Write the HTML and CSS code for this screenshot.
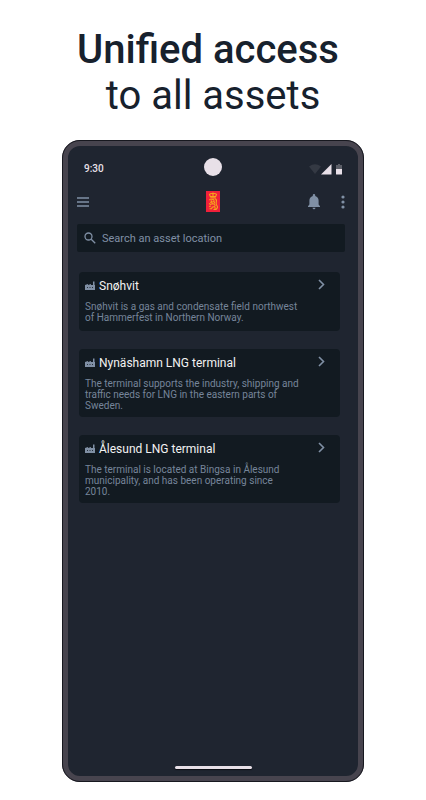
FILE: index.html
```html
<!DOCTYPE html>
<html lang="en">
<head>
    <meta charset="utf-8">
    <title>Unified access to all assets</title>
    <meta name="viewport" content="width=device-width, initial-scale=1">
    <link rel="stylesheet" href="styles.css">
</head>
<body>
<div class="page">
    <h1 class="headline"><strong>Unified access&nbsp;</strong><br>to all assets</h1>

    <div class="phone">
        <div class="status-bar">
            <span class="time">9:30</span>
            <span class="camera"></span>
            <div class="status-icons">
                <svg width="12" height="12" viewBox="0 0 12 12"><path d="M0 3.5Q6-1 12 3.5L6 11z" fill="#343943"/></svg>
                <svg width="11" height="12" viewBox="0 0 11 12"><path d="M0 11.5L10.500 1v10.500z" fill="#e8e0e8"/></svg>
                <svg class="battery" width="6" height="12" viewBox="0 0 6 12">
                    <path d="M2 1h2v1h2v4H0V2h2z" fill="#5c5f68"/>
                    <path d="M0 6h6v5q0 .5-.5.5h-5Q0 11.500 0 11z" fill="#e8e0e8"/>
                </svg>
            </div>
        </div>

        <header class="app-bar">
            <button class="icon-button menu" type="button" aria-label="Menu">
                <svg width="12" height="10" viewBox="0 0 12 10"><path d="M0 1h12M0 5h12M0 9h12" stroke="#8090a5" stroke-width="1.300"/></svg>
            </button>
            <svg class="logo" width="14" height="21" viewBox="0 0 14 21">
                <path d="M0 0h14v21H0z" fill="#f0203a"/>
                <g fill="none" stroke="#f6a51c" stroke-width="1.100">
                    <path d="M4.300 5.500L3.500 3.400Q5 2 7 2.900Q9 2 10.500 3.400L9.700 5.500zM7 1.500v3.500M4.300 6.900h5.400"/>
                    <path d="M3 8.800h2.500q2.500-.8 2.500.8T5.500 11.200H4M3 12.500l1.500 1 2-.8 2 .6q1.200 1 .2 2.200l-2.500.6-.5 1.600H3.500M3 15.500l2-.5M7.500 18.500h3"/>
                    <path d="M9 7.800q2 .6 1.300 3t.7 4-1 3.500M5.500 9.500v2M8.500 10.500v2M9 16v2"/>
                </g>
            </svg>
            <div class="actions">
                <button class="icon-button" type="button" aria-label="Notifications">
                    <svg width="12" height="16" viewBox="0 0 12 16"><path d="M6 0c.8 0 1.200.6 1.200 1.300v.6C9.400 2.500 10.600 4.300 10.600 6.500v4L12 12.200V13H0v-.8l1.400-1.700v-4c0-2.200 1.200-4 3.400-4.600v-.6C4.800.6 5.200 0 6 0zM4.500 13.800h3Q7.300 15.300 6 15.300t-1.500-1.500z" fill="#8090a5"/></svg>
                </button>
                <button class="icon-button" type="button" aria-label="More options">
                    <svg width="4" height="14" viewBox="0 0 4 14" fill="#8090a5"><circle cx="2" cy="2" r="1.600"/><circle cx="2" cy="7" r="1.600"/><circle cx="2" cy="12" r="1.600"/></svg>
                </button>
            </div>
        </header>

        <label class="search">
            <svg width="12" height="12" viewBox="0 0 12 12" fill="none" stroke="#8090a5" stroke-width="1.300"><circle cx="4.500" cy="4.500" r="3.500"/><path d="M7.200 7.200L11.200 11.200"/></svg>
            <input type="search" placeholder="Search an asset location" aria-label="Search an asset location">
        </label>

        <main class="assets">
            <a class="card" href="#snohvit">
                <div class="card-head">
                    <svg class="plant" width="10" height="10" viewBox="0 0 10 10"><path d="M0 9V4l3-1v1l3-1v1h2V.500h1.500V4h.5v5z" fill="#8090a5"/><path d="M2 6h1v1H2zM4.500 6h1v1h-1zM7 6h1v1H7z" fill="#26313d"/></svg>
                    <h2>Snøhvit</h2>
                    <svg class="chevron" width="7" height="11" viewBox="0 0 7 11"><path d="M1 1l4.500 4.500L1 10" fill="none" stroke="#8090a5" stroke-width="1.600"/></svg>
                </div>
                <p>Snøhvit is a gas and condensate field northwest of Hammerfest in Northern Norway.</p>
            </a>
            <a class="card" href="#nynashamn">
                <div class="card-head">
                    <svg class="plant" width="10" height="10" viewBox="0 0 10 10"><path d="M0 9V4l3-1v1l3-1v1h2V.500h1.500V4h.5v5z" fill="#8090a5"/><path d="M2 6h1v1H2zM4.500 6h1v1h-1zM7 6h1v1H7z" fill="#26313d"/></svg>
                    <h2>Nynäshamn LNG terminal</h2>
                    <svg class="chevron" width="7" height="11" viewBox="0 0 7 11"><path d="M1 1l4.500 4.500L1 10" fill="none" stroke="#8090a5" stroke-width="1.600"/></svg>
                </div>
                <p>The terminal supports the industry, shipping and traffic needs for LNG in the eastern parts of Sweden.</p>
            </a>
            <a class="card" href="#alesund">
                <div class="card-head">
                    <svg class="plant" width="10" height="10" viewBox="0 0 10 10"><path d="M0 9V4l3-1v1l3-1v1h2V.500h1.500V4h.5v5z" fill="#8090a5"/><path d="M2 6h1v1H2zM4.500 6h1v1h-1zM7 6h1v1H7z" fill="#26313d"/></svg>
                    <h2>Ålesund LNG terminal</h2>
                    <svg class="chevron" width="7" height="11" viewBox="0 0 7 11"><path d="M1 1l4.500 4.500L1 10" fill="none" stroke="#8090a5" stroke-width="1.600"/></svg>
                </div>
                <p>The terminal is located at Bingsa in Ålesund municipality, and has been operating since<br>2010.</p>
            </a>
        </main>

        <div class="home-bar"></div>
    </div>
</div>
</body>
</html>
```

FILE: styles.css
```css
* {
    box-sizing: border-box;
}

body {
    margin: 0;
    background: #fff;
    font-family: Roboto, "Liberation Sans", sans-serif;
}

.page {
    display: flex;
    flex-direction: column;
    min-height: 100vh;
    padding: 27px 62px 18px;
}

.headline {
    margin: 0 -40px 21px;
    color: #17212d;
    font-size: 40px;
    font-weight: 400;
    line-height: 46px;
    text-align: center;
}

.headline strong {
    font-weight: 500;
}

/* phone frame */
.phone {
    display: flex;
    flex: 1;
    flex-direction: column;
    padding: 12px 0 7px;
    background: #1f2530;
    border: 6px solid #47444e;
    border-radius: 18px;
    outline: 1px solid #17181f;
    outline-offset: -1px;
}

.status-bar {
    display: grid;
    grid-template-columns: 1fr auto 1fr;
    align-items: center;
    padding: 0 16px;
}

.time {
    padding-top: 2px;
    color: #e8e0e8;
    font-size: 10px;
    font-weight: 500;
}

.camera {
    width: 18px;
    height: 18px;
    background: #e8e0e8;
    border-radius: 50%;
}

.status-icons {
    display: flex;
    justify-content: flex-end;
    padding-top: 4px;
}

.battery {
    margin-left: 4px;
}

.app-bar {
    display: grid;
    grid-template-columns: 1fr auto 1fr;
    align-items: center;
    padding: 15px 9px 12px;
}

.icon-button {
    display: flex;
    padding: 0;
    background: none;
    border: 0;
}

.actions {
    display: flex;
    justify-content: flex-end;
    align-items: center;
    gap: 21px;
    padding-right: 4px;
}

.search {
    display: flex;
    align-items: center;
    gap: 6px;
    height: 28px;
    margin: 0 13px 0 9px;
    padding: 0 7px;
    background: #121a21;
    border-radius: 2px;
}

.search input {
    flex: 1;
    min-width: 0;
    padding: 0;
    color: #8090a5;
    font: 11px Roboto, "Liberation Sans", sans-serif;
    background: none;
    border: 0;
    outline: 0;
}

.search input::placeholder {
    color: #8090a5;
}

/* asset list */
.assets {
    display: flex;
    flex: 1;
    flex-direction: column;
    gap: 18px;
    padding: 20px 18px 20px 11px;
}

.card {
    min-height: 59px;
    padding: 7px 6px 6px;
    color: #76859a;
    text-decoration: none;
    background: #121a21;
    border-radius: 4px;
}

.card-head {
    display: flex;
    align-items: center;
    gap: 4px;
    padding-right: 9px;
}

.card h2 {
    flex: 1;
    margin: 0;
    color: #f2f2f2;
    font-size: 12px;
    font-weight: 400;
    line-height: 14px;
}

.chevron {
    align-self: flex-start;
}

.card p {
    margin: 8px 33px 0 0;
    font-size: 10px;
    line-height: 11px;
}

.home-bar {
    align-self: center;
    width: 77px;
    height: 3px;
    background: #e8e0e8;
    border-radius: 2px;
    box-shadow: 0 1px 1px #0a0d12;
}
```
